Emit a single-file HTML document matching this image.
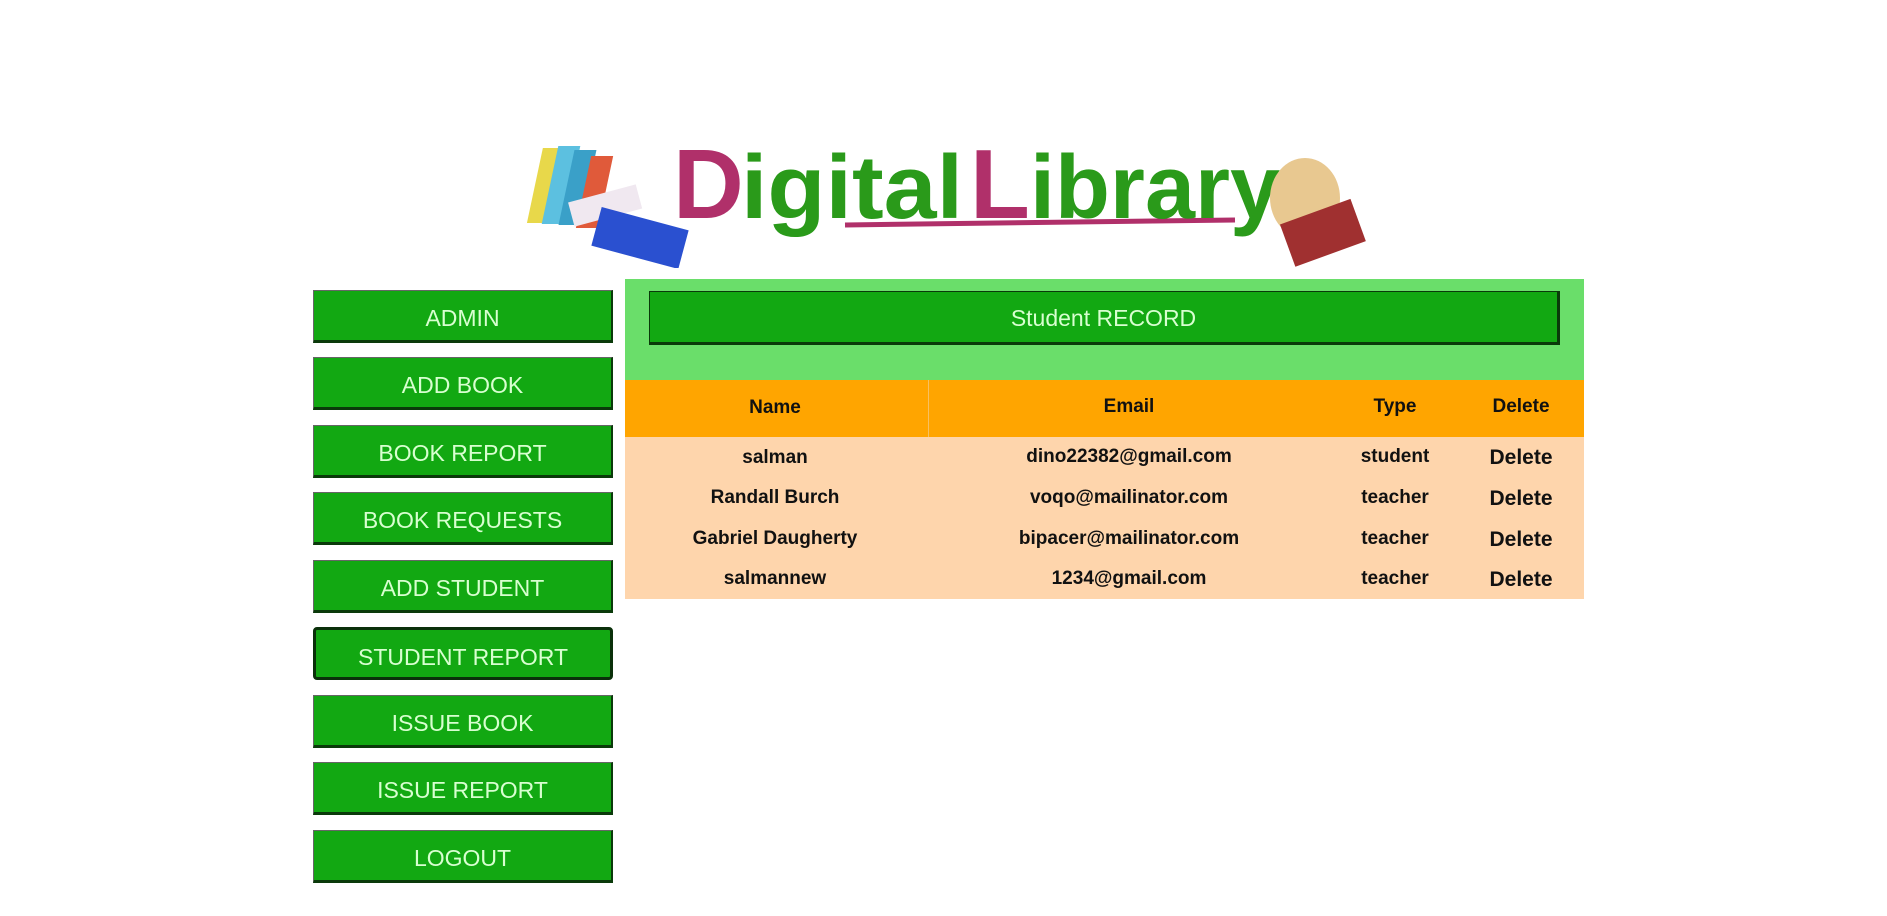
<!DOCTYPE html>
<html><head><style>
body{margin:0;width:1887px;height:916px;background:#fff;font-family:"Liberation Sans",sans-serif;position:relative;overflow:hidden}
.btn{position:absolute;left:313px;width:300px;height:53px;background:#12a812;border:1px solid #666;border-bottom:3px solid #0a3a0a;border-right:2px solid #0a3a0a;color:#d8ffd0;font-size:23px;text-align:center;line-height:55px;box-sizing:border-box}
.act{border:3px solid #0a300a;border-radius:4px}
.panel{position:absolute;left:625px;top:279px;width:959px;height:101px;background:#6ade6a}
.bar{position:absolute;left:649px;top:291px;width:911px;height:54px;background:#12a812;border:1px solid #0a3a0a;border-bottom:3px solid #0a3a0a;border-right:3px solid #0a3a0a;box-sizing:border-box;color:#d8ffd0;font-size:23px;text-align:center;line-height:52px}
.hdr{position:absolute;left:625px;top:380px;width:959px;height:57px;background:#ffa500}
.rows{position:absolute;left:625px;top:437px;width:959px;height:162px;background:#fed5ac}
.t{position:absolute;font-weight:bold;font-size:19px;color:#111;transform:translateX(-50%);white-space:nowrap}
</style></head><body>
<svg style="position:absolute;left:515px;top:138px" width="880" height="130">
<g transform="skewX(-12)">
<rect x="30" y="10" width="20" height="75" fill="#e8d84a"/>
<rect x="45" y="8" width="22" height="78" fill="#5cc0e0"/>
<rect x="62" y="12" width="22" height="75" fill="#3aa0c8"/>
<rect x="80" y="18" width="22" height="72" fill="#e05a3a"/>
</g>
<rect x="55" y="55" width="70" height="25" fill="#f0e8f0" transform="rotate(-15 90 67)"/>
<rect x="80" y="80" width="90" height="40" fill="#2a50d0" transform="rotate(15 125 100)"/>
<line x1="330" y1="87" x2="720" y2="82" stroke="#b0306a" stroke-width="5"/>
<text x="158" y="80" font-family="Liberation Sans" font-weight="bold" font-size="98" fill="#b0306a">D</text>
<text x="226" y="80" font-family="Liberation Sans" font-weight="bold" font-size="90" fill="#2a9a1a" textLength="222" lengthAdjust="spacingAndGlyphs">igital</text>
<text x="455" y="80" font-family="Liberation Sans" font-weight="bold" font-size="98" fill="#b0306a">L</text>
<text x="515" y="80" font-family="Liberation Sans" font-weight="bold" font-size="90" fill="#2a9a1a" textLength="250" lengthAdjust="spacingAndGlyphs">ibrary</text>
<ellipse cx="790" cy="60" rx="35" ry="40" fill="#e8c890"/>
<rect x="770" y="75" width="75" height="45" fill="#a03030" transform="rotate(-20 800 95)"/>
</svg>
<div class="btn" style="top:290px">ADMIN</div>
<div class="btn" style="top:357px">ADD BOOK</div>
<div class="btn" style="top:425px">BOOK REPORT</div>
<div class="btn" style="top:492px">BOOK REQUESTS</div>
<div class="btn" style="top:560px">ADD STUDENT</div>
<div class="btn act" style="top:627px">STUDENT REPORT</div>
<div class="btn" style="top:695px">ISSUE BOOK</div>
<div class="btn" style="top:762px">ISSUE REPORT</div>
<div class="btn" style="top:830px">LOGOUT</div>
<div class="panel"></div>
<div class="bar">Student RECORD</div>
<div class="hdr"><div style="position:absolute;left:303px;top:0;width:1px;height:57px;background:#f8c060"></div></div>
<div class="rows"></div>
<div class="t" style="left:775px;top:397px">Name</div>
<div class="t" style="left:1129px;top:396px">Email</div>
<div class="t" style="left:1395px;top:396px">Type</div>
<div class="t" style="left:1521px;top:396px">Delete</div>
<div class="t" style="left:775px;top:447px">salman</div><div class="t" style="left:1129px;top:446px">dino22382@gmail.com</div><div class="t" style="left:1395px;top:446px">student</div><div class="t" style="left:1521px;top:446px;font-size:21px">Delete</div>
<div class="t" style="left:775px;top:487px">Randall Burch</div><div class="t" style="left:1129px;top:487px">voqo@mailinator.com</div><div class="t" style="left:1395px;top:487px">teacher</div><div class="t" style="left:1521px;top:487px;font-size:21px">Delete</div>
<div class="t" style="left:775px;top:528px">Gabriel Daugherty</div><div class="t" style="left:1129px;top:528px">bipacer@mailinator.com</div><div class="t" style="left:1395px;top:528px">teacher</div><div class="t" style="left:1521px;top:528px;font-size:21px">Delete</div>
<div class="t" style="left:775px;top:568px">salmannew</div><div class="t" style="left:1129px;top:568px">1234@gmail.com</div><div class="t" style="left:1395px;top:568px">teacher</div><div class="t" style="left:1521px;top:568px;font-size:21px">Delete</div>
</body></html>
